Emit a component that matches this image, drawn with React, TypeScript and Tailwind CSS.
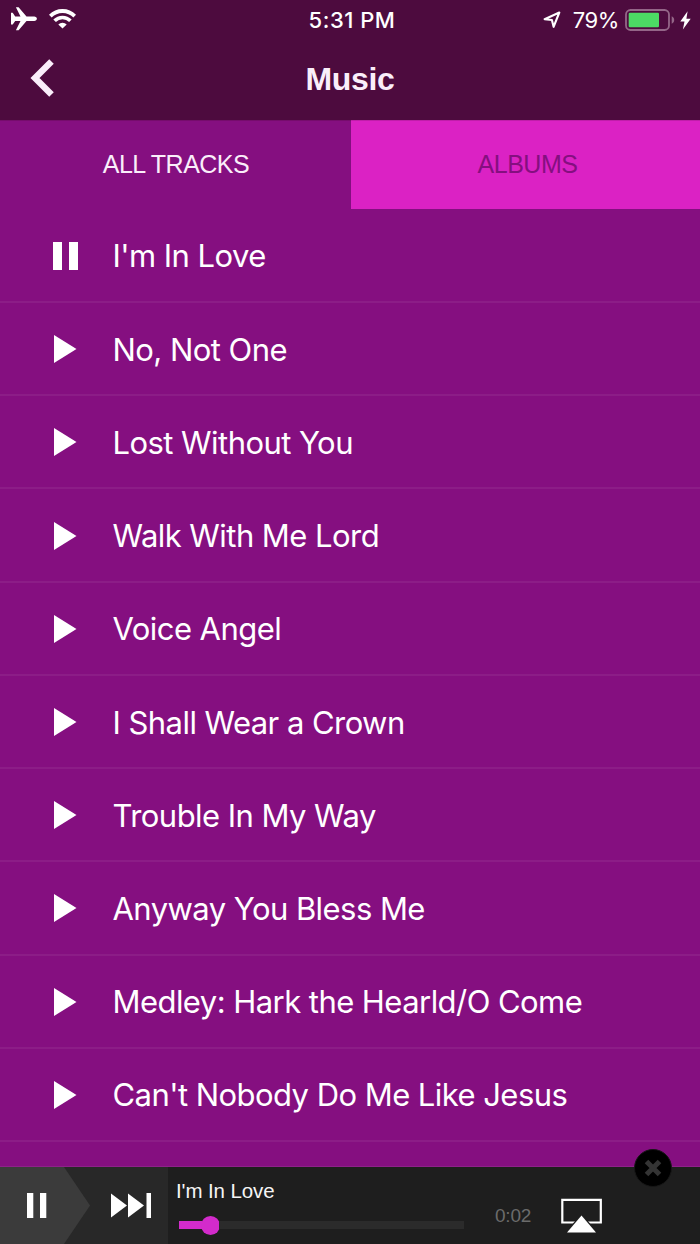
import React from "react";

interface TrackRowProps {
  title: string;
  playing?: boolean;
}

const tracks = [
  "I'm In Love",
  "No, Not One",
  "Lost Without You",
  "Walk With Me Lord",
  "Voice Angel",
  "I Shall Wear a Crown",
  "Trouble In My Way",
  "Anyway You Bless Me",
  "Medley: Hark the Hearld/O Come",
  "Can't Nobody Do Me Like Jesus",
];

const PlaneIcon = () => (
  <svg width="26" height="24" viewBox="0 0 26 24" fill="#fff">
    <path d="M0 5.800h1.700l2.500 3.700h5.300L4.900.2h2.700l7.900 9.300h7.700c1.500 0 2.700 1 2.700 2.200s-1.200 2.200-2.700 2.200h-7.700L7.600 23.200H4.900l4.600-9.300H4.200l-2.500 3.700H0z" />
  </svg>
);

const WifiIcon = () => (
  <svg width="27" height="20" viewBox="0 0 27 20" fill="none" stroke="#fff">
    <path d="M1.300 7.100a17.200 17.200 0 0 1 24.400 0" strokeWidth="3.800" />
    <path d="M5.600 11.800a11.100 11.100 0 0 1 15.800 0" strokeWidth="3.600" />
    <path d="M13.500 19.500l-4.200-4.100a5.900 5.900 0 0 1 8.400 0z" fill="#fff" stroke="none" />
  </svg>
);

const LocationIcon = () => (
  <svg width="18" height="18" viewBox="0 0 18 18" fill="none">
    <path
      d="M16.300 1.500L10.600 15.800 8.900 9 1.600 8.200z"
      stroke="#fff"
      strokeWidth="2.100"
      strokeLinejoin="round"
    />
  </svg>
);

const BatteryIcon = () => (
  <svg width="50" height="22" viewBox="0 0 50 22">
    <rect
      x="1"
      y="1"
      width="43"
      height="20"
      rx="4.500"
      fill="none"
      stroke="#946688"
      strokeWidth="1.800"
    />
    <rect x="3.700" y="3.700" width="30.300" height="14.600" rx="1.300" fill="#4cd964" />
    <path d="M46.700 7.300c1.700.7 2.500 2 2.500 3.700s-.8 3-2.500 3.700z" fill="#946688" />
  </svg>
);

const BoltIcon = () => (
  <svg width="11" height="19" viewBox="0 0 11 19" fill="#fff">
    <path d="M7.600.3L.3 10.500h4.200L2.900 18.400l7.800-10.700H6.400z" />
  </svg>
);

const StatusBar = () => (
  <div className="grid h-10 grid-cols-[1fr_auto_1fr] items-center text-[22px] text-white">
    <div className="flex items-center gap-[12px] pb-[3px] pl-[11px]">
      <PlaneIcon />
      <WifiIcon />
    </div>
    <span className="pl-[4px] font-medium tracking-[0.5px]">5:31 PM</span>
    <div className="flex items-center justify-end pr-[9px]">
      <LocationIcon />
      <span className="ml-[12px] mr-[6px] tracking-[-0.4px]">79%</span>
      <BatteryIcon />
      <span className="ml-[5px]">
        <BoltIcon />
      </span>
    </div>
  </div>
);

const NavBar = () => (
  <div className="grid h-20 grid-cols-3 items-center">
    <button className="w-fit pb-1 pl-[30px]" aria-label="Back">
      <svg width="25" height="38" viewBox="0 0 25 38" fill="none">
        <path d="M21.500 2.500L5 19l16.500 16.500" stroke="#faeefa" strokeWidth="6.400" />
      </svg>
    </button>
    <h1 className="pb-[3px] text-center font-['Liberation_Sans'] text-[32px] font-bold tracking-[-0.3px] text-[#faeefa]">
      Music
    </h1>
  </div>
);

const Tabs = () => (
  <div className="flex h-[89px] font-['Liberation_Sans'] text-[25px] tracking-[-0.5px]">
    <button className="w-[351px] border-t border-[#760c6c] pl-px text-[#faeefa]">
      ALL TRACKS
    </button>
    <button className="flex-1 border-t border-[#c01da9] bg-[#db22c4] pl-1 text-[#850f80]">
      ALBUMS
    </button>
  </div>
);

const TrackRow = ({ title, playing }: TrackRowProps) => (
  <li className="flex h-[93.22px] items-center border-b-2 border-[#8c1d87] pl-[53px] pt-px">
    <svg width="26" height="28" viewBox="0 0 26 28" fill="#fff">
      {playing ? (
        <path d="M0 0h9v28H0zM16 0h9v28h-9z" />
      ) : (
        <path d="M1 0l22.500 14L1 28z" />
      )}
    </svg>
    <span className="ml-[33.5px] whitespace-nowrap text-[31px] leading-none tracking-[-0.55px] text-white">
      {title}
    </span>
  </li>
);

const Player = () => (
  <footer className="relative flex h-[77px] shrink-0 bg-[#1e1e1e]">
    <div className="flex w-[168px] bg-[#282828]">
      <button
        className="flex w-[90px] items-center bg-[#3b3b3b] pl-[27px] [clip-path:polygon(0_0,64px_0,100%_50%,64px_100%,0_100%)]"
        aria-label="Pause"
      >
        <svg width="20" height="25" viewBox="0 0 20 25" fill="#fff">
          <path d="M0 0h6.300v25H0zM13 0h6.300v25H13z" />
        </svg>
      </button>
      <button className="flex items-center pl-[21px]" aria-label="Next">
        <svg width="41" height="25" viewBox="0 0 41 25" fill="#fff">
          <path d="M0 .5l16 12-16 12zM17 .5l16 12-16 12zM35.500 0H40v25h-4.500z" />
        </svg>
      </button>
    </div>
    <div className="w-[296px] pl-2">
      <p className="pt-[12px] font-['Liberation_Sans'] text-[20.5px] leading-6 tracking-[-0.1px] text-[#f5f5f5]">
        I'm In Love
      </p>
      <div className="ml-[3px] mt-[12px] flex h-[20px] items-center">
        <div className="h-2 w-[23px] bg-[#d32bcb]" />
        <div className="-ml-px size-[19px] rounded-full bg-[#d32bcb]" />
        <div className="-ml-px h-2 flex-1 bg-[#2b2b2b]" />
      </div>
    </div>
    <span className="ml-[31px] mt-[37px] w-[38px] font-['Liberation_Sans'] text-[19px] leading-6 tracking-[-0.2px] text-[#6b6b6b]">
      0:02
    </span>
    <svg
      className="ml-[28px] mt-[31px]"
      width="42"
      height="35"
      viewBox="0 0 42 35"
    >
      <path d="M1.300 1.800h38.500v22.700H1.300z" fill="none" stroke="#fff" strokeWidth="2.200" />
      <path d="M20.500 15.500L38 36H3z" fill="#1e1e1e" />
      <path d="M20.500 17.500L35 34.500H6z" fill="#fff" />
    </svg>
    {/* close badge sits across the player's top edge */}
    <button
      className="absolute left-[634px] top-[-18px] flex size-[38px] items-center justify-center rounded-full border border-[#161616] bg-black"
      aria-label="Close"
    >
      <svg width="18" height="18" viewBox="0 0 18 18">
        <path d="M2.500 2.500l13 13M15.500 2.500l-13 13" stroke="#343434" strokeWidth="5" />
      </svg>
    </button>
  </footer>
);

export default function App() {
  return (
    <div className="flex h-[1244px] w-[700px] flex-col overflow-hidden bg-[#850f80] font-['Inter',sans-serif]">
      <header className="shrink-0 bg-[#4d0b3e]">
        <StatusBar />
        <NavBar />
      </header>
      <Tabs />
      <ul className="min-h-0 flex-1 border-b border-[#8e2189] pt-[0.8px]">
        {tracks.map((title, index) => (
          <TrackRow key={title} title={title} playing={index === 0} />
        ))}
      </ul>
      <Player />
    </div>
  );
}
